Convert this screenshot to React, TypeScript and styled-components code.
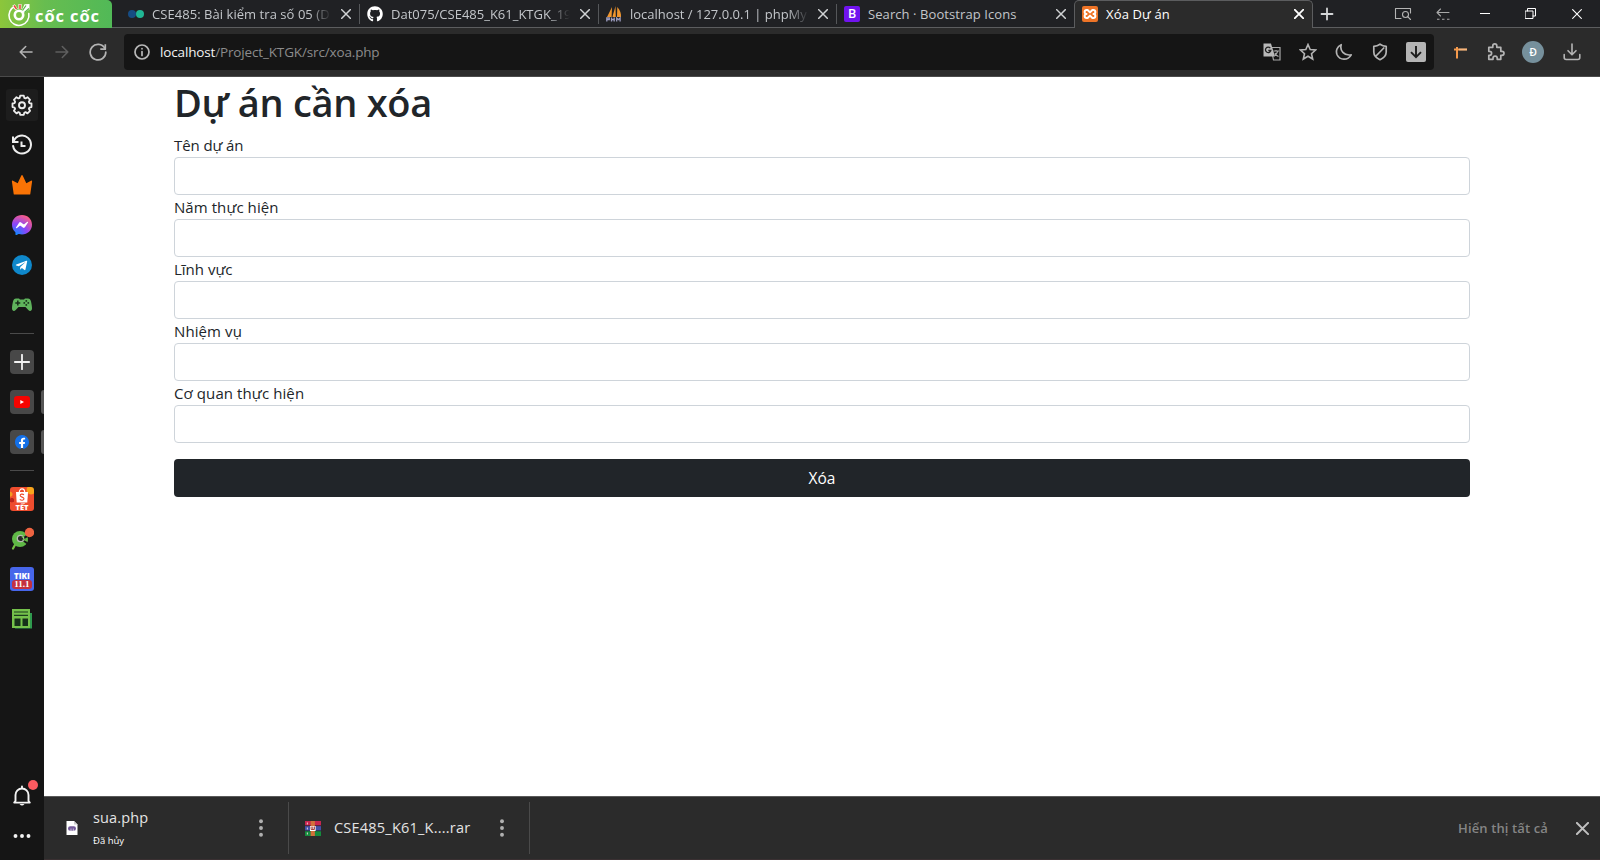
import React from "react";
import styled, { createGlobalStyle } from "styled-components";
import { FaGithub, FaTelegramPlane } from "react-icons/fa";
import { BsMessenger, BsFacebook } from "react-icons/bs";

const ui = `"Open Sans", "Noto Sans", sans-serif`;
const line = "#5c5d5f";

const GlobalStyle = createGlobalStyle`
  *, *::before, *::after { box-sizing: border-box; }
  body { margin: 0; background: #fff; font-family: ${ui}; overflow: hidden; }
  svg { display: block; flex: none; }
`;

const Browser = styled.div`
  display: flex;
  flex-direction: column;
  width: 1600px;
  height: 860px;
  background: #fff;
`;

/* ---------- tab strip ---------- */

const TabStrip = styled.div`
  display: flex;
  height: 28px;
  background: #202124;
`;

const Brand = styled.div`
  display: flex;
  align-items: center;
  width: 112px;
  height: 28px;
  padding-left: 7px;
  border-top-right-radius: 5px;
  background: linear-gradient(90deg, #8cc63b 0, #67bd50 45px, #51b957 100%);
`;

const BrandName = styled.span`
  margin: 4px 0 0 4px;
  color: #fff;
  font-size: 16.5px;
  line-height: 24px;
  font-weight: 700;
  letter-spacing: 0.9px;
  white-space: nowrap;
`;

const StripFill = styled.div<{ $w?: number }>`
  ${(p) => (p.$w ? `width: ${p.$w}px;` : "flex: 1;")}
  border-bottom: 1px solid ${line};
`;

const Tab = styled.div<{ $active?: boolean; $divider?: boolean; $w: number }>`
  position: relative;
  display: flex;
  align-items: center;
  width: ${(p) => p.$w}px;
  height: 28px;
  padding: 0 ${(p) => (p.$divider ? 9 : 8)}px 0 7px;
  color: ${(p) => (p.$active ? "#fff" : "#c3c6ca")};
  ${(p) =>
    p.$active
      ? `background: #2b2b2b; border: 1px solid ${line}; border-bottom: 0; border-radius: 5px 5px 0 0; padding-bottom: 1px;`
      : `border-bottom: 1px solid ${line};`}
  ${(p) =>
    p.$divider
      ? `&::after { content: ""; position: absolute; right: 0; top: 4px; width: 1px; height: 20px; background: #55575a; }`
      : ""}
`;

const TabTitle = styled.span<{ $ls: number; $fade?: boolean }>`
  flex: 1;
  margin-left: 8px;
  margin-right: 6px;
  white-space: nowrap;
  font-size: 13px;
  line-height: 20px;
  letter-spacing: ${(p) => p.$ls}px;
  ${(p) => (p.$fade ? "mask-image: linear-gradient(90deg, #000 158px, transparent 179px);" : "")}
`;

const StripButton = styled.div<{ $w: number }>`
  display: flex;
  align-items: center;
  justify-content: center;
  width: ${(p) => p.$w}px;
  height: 28px;
  border-bottom: 1px solid ${line};
`;

/* ---------- toolbar ---------- */

const Toolbar = styled.div`
  display: flex;
  align-items: center;
  height: 49px;
  padding: 0 8px;
  background: #2b2b2b;
  border-bottom: 1px solid #4a4a4a;
`;

const ToolCell = styled.div<{ $w?: number }>`
  display: flex;
  flex: none;
  align-items: center;
  justify-content: center;
  width: ${(p) => p.$w ?? 36}px;
  height: 36px;
`;

const AddressBar = styled.div`
  display: flex;
  flex: none;
  align-items: center;
  width: 1310px;
  height: 36px;
  margin: 0 8px;
  background: #151515;
  border-radius: 4px;
`;

const Url = styled.span`
  flex: 1;
  color: #8c8c8c;
  font-size: 13.5px;
  letter-spacing: -0.15px;
  b { font-weight: 400; color: #f2f2f2; }
`;

const Avatar = styled.div`
  display: flex;
  align-items: center;
  justify-content: center;
  width: 22px;
  height: 22px;
  border-radius: 50%;
  background: #76909c;
  color: #fff;
  font-size: 10.5px;
  font-weight: 600;
`;

/* ---------- body ---------- */

const Body = styled.div`
  display: flex;
  flex: 1;
  min-height: 0;
`;

const Sidebar = styled.div`
  display: flex;
  flex-direction: column;
  align-items: center;
  width: 44px;
  padding: 8px 0 4px;
  background: #151515;
`;

const SideCell = styled.div<{ $open?: boolean }>`
  position: relative;
  display: flex;
  align-items: center;
  justify-content: center;
  width: 44px;
  height: 40px;
  ${(p) =>
    p.$open
      ? `&::after { content: ""; position: absolute; right: 0; top: 8px; width: 3px; height: 24px; background: #555; border-radius: 3px 0 0 3px; }`
      : ""}
`;

const SettingsTile = styled.div`
  display: flex;
  align-items: center;
  justify-content: center;
  width: 32px;
  height: 32px;
  border-radius: 3px;
  background: #1d1d1d;
`;

const SiteTile = styled.div`
  display: flex;
  align-items: center;
  justify-content: center;
  width: 24px;
  height: 24px;
  border-radius: 4px;
  background: #484848;
`;

const SideRule = styled.div`
  width: 24px;
  height: 1px;
  margin: 8px 0;
  background: #4a4a4a;
`;

const Spacer = styled.div`
  flex: 1;
`;

const Main = styled.div`
  display: flex;
  flex-direction: column;
  flex: 1;
`;

const Page = styled.main`
  flex: 1;
  width: 1320px;
  margin: 0 auto;
  padding: 0 12px;
  color: #212529;
`;

const Heading = styled.h1`
  margin: 0 0 8px;
  font-size: 38px;
  line-height: 51px;
  height: 48px;
  font-weight: 600;
  letter-spacing: -0.3px;
`;

const Label = styled.label<{ $ls: number }>`
  display: block;
  height: 24px;
  font-size: 15px;
  line-height: 25px;
  letter-spacing: ${(p) => p.$ls}px;
`;

const Input = styled.input`
  display: block;
  width: 100%;
  height: 38px;
  border: 1px solid #ced4da;
  border-radius: 4px;
  background: #fff;
  outline: none;
`;

const Submit = styled.button`
  display: block;
  width: 100%;
  height: 38px;
  margin-top: 16px;
  padding: 0;
  border: 0;
  border-radius: 4px;
  background: #212529;
  color: #fff;
  font-family: ${ui};
  font-size: 15.5px;
  line-height: 38px;
`;

/* ---------- downloads ---------- */

const Downloads = styled.div`
  display: flex;
  align-items: center;
  height: 64px;
  padding-right: 5px;
  background: #2b2b2b;
  border-top: 1px solid #5a5a5a;
  border-bottom: 1px solid #3a3032;
`;

const DownloadItem = styled.div<{ $w: number; $pad: number }>`
  display: flex;
  align-items: center;
  width: ${(p) => p.$w}px;
  height: 52px;
  padding-left: ${(p) => p.$pad}px;
  padding-right: 25px;
  border-right: 1px solid #4a4a4a;
`;

const FileInfo = styled.div<{ $gap: number }>`
  flex: 1;
  margin-left: ${(p) => p.$gap}px;
  white-space: nowrap;
`;

const FileName = styled.div<{ $ls: number }>`
  color: #e4e4e4;
  font-size: 14.5px;
  line-height: 22px;
  letter-spacing: ${(p) => p.$ls}px;
`;

const FileStatus = styled.div`
  margin-top: 3px;
  color: #fff;
  font-size: 9.5px;
  line-height: 18px;
`;

const ShowAll = styled.span`
  margin-right: 21px;
  color: #858585;
  font-size: 13px;
  font-weight: 600;
  letter-spacing: 0.12px;
`;

/* ---------- icons ---------- */

const Cross = ({ s = 10, c = "#d0d2d4", w = 1.5 }: { s?: number; c?: string; w?: number }) => (
  <svg width={s} height={s} viewBox="0 0 10 10" stroke={c} strokeWidth={(w * 10) / s} strokeLinecap="square">
    <path d="M.7.7l8.6 8.6M9.3.7L.7 9.3" />
  </svg>
);

const Stroke = ({ w = 20, h = w, c = "#b4b4b4", sw = 1.6, children }: {
  w?: number; h?: number; c?: string; sw?: number; children: React.ReactNode;
}) => (
  <svg width={w} height={h} viewBox={`0 0 ${w} ${h}`} fill="none" stroke={c} strokeWidth={sw} strokeLinecap="round" strokeLinejoin="round">
    {children}
  </svg>
);

const BrandMark = () => (
  <svg width="24" height="26" viewBox="0 0 24 26" fill="none">
    <path d="M8 5.200A10 10 0 1 0 21.800 12.500" stroke="#fff" strokeWidth="1.500" strokeLinecap="round" />
    <circle cx="12" cy="14" r="4.200" stroke="#fff" strokeWidth="2.600" />
    <path d="M14.500 10L17.500 3.200 22.500 3V8.500L17 12z" fill="#fff" />
    <path d="M15.500 9.500l3.500-5M17.500 11.500l4.500-4" stroke="#5bb947" strokeWidth="1.300" />
    <path d="M13 8V3M9.500 8.500L6.500 4" stroke="#fff" strokeWidth="3" />
    <path d="M13 8V3.500M9.500 8L7 4.500" stroke="#e9483a" strokeWidth="1.600" />
  </svg>
);

const MoodleDots = () => (
  <svg width="16" height="16" viewBox="0 0 16 16">
    <circle cx="4" cy="8" r="4" fill="#164c83" />
    <circle cx="12" cy="8" r="4" fill="#20b795" />
  </svg>
);

const Sails = () => (
  <svg width="16" height="16" viewBox="0 0 16 16">
    <path d="M6 1L1 11h4.6zM9.500 0C8.500 4 7 8 6.500 11h3.300zM11.300 1c3 3 4 7 3.700 10h-4z" fill="#f0962e" />
    <path d="M.8 15.500v-3.500h2.500v1.700H.8M5.500 11.500v4M5.500 13.500h2.700M8.200 11.500v4M10.700 15.500v-3.500l1.700 1.700 1.700-1.700v3.500" stroke="#9c9cc0" strokeWidth="1.300" fill="none" />
  </svg>
);

const BootstrapMark = styled.div`
  width: 16px;
  height: 16px;
  border-radius: 2px;
  background: #7113ee;
  color: #fff;
  font-size: 12.5px;
  font-weight: 600;
  line-height: 16px;
  text-align: center;
`;

const Xampp = () => (
  <svg width="16" height="16" viewBox="0 0 16 16">
    <rect width="16" height="16" rx="2" fill="#ee7427" />
    <path d="M5.600 4H4.800a2 2 0 0 0-.3 4 2 2 0 0 0 .3 4h.8L8 9.600l2.400 2.400h.8a2 2 0 0 0 .3-4 2 2 0 0 0-.3-4h-.8L8 6.400z" fill="none" stroke="#fff" strokeWidth="2" strokeLinejoin="round" />
  </svg>
);

const Gear = () => (
  <Stroke w={22} c="#ededed" sw={1.9}>
    <path d="M9.1 1.8h3.8l.5 2.4 1.3.6 2.1-1.3 2.7 2.7-1.3 2.1.6 1.3 2.2.5v3.8l-2.2.5-.6 1.3 1.3 2.1-2.7 2.7-2.1-1.3-1.3.6-.5 2.2H9.1l-.5-2.2-1.3-.6-2.1 1.3-2.7-2.7 1.3-2.1-.6-1.3L1 13.900V10.100l2.200-.5.6-1.300L2.500 6.200l2.700-2.700 2.100 1.300 1.300-.6z" transform="translate(.55 -.1) scale(.95)" />
    <circle cx="11" cy="11.200" r="3" />
  </Stroke>
);

const History = () => (
  <Stroke w={22} c="#ededed" sw={2}>
    <path d="M2.700 7A9 9 0 1 1 2.100 12" />
    <path d="M2 2.500v5.500h5.500" strokeLinecap="butt" strokeLinejoin="miter" />
    <path d="M10.500 7.500V12h4" strokeLinecap="butt" strokeLinejoin="miter" />
  </Stroke>
);

const Crown = () => (
  <svg width="22" height="22" viewBox="0 0 22 22">
    <path d="M3.300 20.600Q2.800 20.600 2.700 20L.9 7.500Q.8 6.300 2 6.700l4.700 2.600L10.300 1.500q.7-1 1.400 0l3.600 7.800L20 6.700q1.200-.4 1.100.8L19.300 20q-.1.600-.6.600z" fill="#f97305" />
  </svg>
);

const MessengerGradient = () => (
  <svg width="0" height="0">
    <defs>
      <radialGradient id="msg" cx=".2" cy="1" r="1.100">
        <stop offset="0" stopColor="#0a8cff" />
        <stop offset=".5" stopColor="#8a45fb" />
        <stop offset="1" stopColor="#ff5d80" />
      </radialGradient>
    </defs>
  </svg>
);

const MessengerBack = styled.div`
  display: flex;
  width: 20px;
  height: 20px;
  background: radial-gradient(circle at 50% 50%, #fff 0 7px, transparent 7.500px);
  svg path { fill: url(#msg); }
`;

const TelegramDisc = styled.div`
  display: flex;
  align-items: center;
  justify-content: center;
  width: 20px;
  height: 20px;
  padding-right: 2px;
  border-radius: 50%;
  background: #0f88cb;
`;

const FacebookBack = styled.div`
  display: flex;
  border-radius: 50%;
  background: radial-gradient(circle, #fff 0 6px, transparent 6.500px);
`;

const Gamepad = () => (
  <svg width="22" height="16" viewBox="0 0 22 16">
    <path d="M5 1.500h3l1 1h4l1-1h3c1.600 0 2.500 1 3 3 .6 2.600 1 5 1 7 0 2.500-2.200 3.200-3.700 1.500L14.500 10h-7l-2.800 3C3.200 14.700 1 14 1 11.500c0-2 .4-4.400 1-7 .5-2 1.400-3 3-3z" fill="#5fb35c" />
    <path d="M6.800 3.500v5M4.300 6h5" stroke="#17301a" strokeWidth="1.500" />
    <g fill="#17301a"><circle cx="15.300" cy="3.900" r=".95" /><circle cx="15.300" cy="7.900" r=".95" /><circle cx="13.300" cy="5.900" r=".95" /><circle cx="17.300" cy="5.900" r=".95" /></g>
  </svg>
);

const YouTube = () => (
  <svg width="16" height="12" viewBox="0 0 16 12">
    <rect width="16" height="12" rx="3" fill="#f60400" />
    <path d="M6.300 3.900v4.200L10 6z" fill="#fff" />
  </svg>
);

const ShopTile = styled.div`
  display: flex;
  flex-direction: column;
  align-items: center;
  width: 24px;
  height: 24px;
  padding-top: 1px;
  border-radius: 3px;
  overflow: hidden;
  background: radial-gradient(circle at 88% 12%, #f9a51c 0 4px, transparent 5px),
    radial-gradient(circle at 0 30%, #f39a20 0 2px, transparent 3px),
    radial-gradient(circle at 8% 55%, #b9241a 0 2px, transparent 2.500px), #ee4d2e;
  color: #fff;
  font-size: 7.500px;
  font-weight: 800;
  line-height: 8px;
`;

const ShopBag = () => (
  <svg width="14" height="15" viewBox="0 0 14 15">
    <path d="M1 4h12l-.7 10.500H1.700z" fill="#fff" />
    <path d="M4.300 4.500C4.300-.3 9.700-.3 9.700 4.500" fill="none" stroke="#fff" strokeWidth="1.200" />
    <path d="M9 6.800C7.500 5.600 5 6 5.200 7.600c.2 1.700 3.800 1.400 3.800 3.200 0 1.700-2.800 1.800-4.200.6" fill="none" stroke="#ee4d2e" strokeWidth="1.100" />
  </svg>
);

const Lime = () => (
  <svg width="24" height="24" viewBox="0 0 24 24">
    <path d="M6 16l-3 5.500" stroke="#74c043" strokeWidth="2.200" strokeLinecap="round" />
    <circle cx="10" cy="12" r="8" fill="#5fb846" />
    <path d="M10 12l8-5.500 1 3-4 2 2.500 4-1 1.500z" fill="#151515" />
    <circle cx="10.500" cy="11.500" r="3.200" fill="#292929" stroke="#b5bdb0" strokeWidth="1.300" />
    <path d="M12 10.500l5.500-4.500M13 12l4.500 2" stroke="#67b94a" strokeWidth="1.400" />
    <circle cx="19.500" cy="5.500" r="4.700" fill="#ee6341" />
  </svg>
);

const TikiTile = styled.div`
  display: flex;
  flex-direction: column;
  align-items: center;
  width: 24px;
  height: 24px;
  padding-top: 4px;
  border-radius: 3px;
  background: #4766ea;
  color: #fff;
  font-size: 8px;
  font-weight: 800;
  line-height: 9px;
`;

const TikiDate = styled.span`
  display: block;
  width: 20px;
  height: 9px;
  border-radius: 3px;
  background: #c5313f;
  font-family: "Liberation Serif", serif;
  font-size: 9px;
  font-weight: 700;
  line-height: 9px;
  text-align: center;
`;

const News = () => (
  <svg width="22" height="22" viewBox="0 0 22 22">
    <path d="M19 5h2v15.500H4V19h15z" fill="#2f9a4e" />
    <rect x="1" y="1" width="18" height="19" fill="#74c14b" />
    <path d="M3 4h14M3 7.300h14" stroke="#1b3d1d" strokeWidth="1.200" />
    <path d="M3.500 10.500h6v7.500h-6zM11.500 10.500h5.500v7.500h-5.500z" fill="#16301a" />
  </svg>
);

const Bell = () => (
  <svg width="32" height="34" viewBox="0 0 32 34" fill="none">
    <path d="M9.500 22v-6a6.500 6.500 0 0 1 13 0V22l1.300 1.600H8.200zM16 7.500v2" stroke="#f3f3f3" strokeWidth="1.900" strokeLinecap="round" strokeLinejoin="round" />
    <path d="M13.500 25h5q-2.500 3-5 0z" fill="#f3f3f3" />
    <circle cx="27" cy="6" r="5" fill="#fb5a60" />
  </svg>
);

const Dots = ({ vertical }: { vertical?: boolean }) => (
  <svg width={vertical ? 4 : 18} height={vertical ? 18 : 4} viewBox={vertical ? "0 0 4 18" : "0 0 18 4"} fill={vertical ? "#b0b0b0" : "#f3f3f3"}>
    {(vertical ? [2.3, 9, 15.700] : [2.500, 9, 15.500]).map((n) => (
      <circle key={n} cx={vertical ? 2 : n} cy={vertical ? n : 2} r="1.950" />
    ))}
  </svg>
);

const PhpFile = () => (
  <svg width="12" height="14" viewBox="0 0 12 14">
    <path d="M.5 0H8l3.500 3.500V14H.5z" fill="#fff" />
    <path d="M8 0v3.500h3.500" fill="#ccc" />
    <rect x="2" y="5.300" width="8" height="4.400" rx="2.200" fill="#735a99" />
    <path d="M5 7.500v2.500M7.300 7.500v2.500" stroke="#fff" strokeWidth=".6" />
  </svg>
);

const RarFile = () => (
  <svg width="16" height="15" viewBox="0 0 17 15" preserveAspectRatio="none">
    <rect width="17" height="5" fill="#c72650" />
    <rect y="5" width="17" height="5" fill="#4450a8" />
    <rect y="10" width="17" height="5" fill="#158b3d" />
    <path d="M0 4.700h17M0 9.800h17" stroke="#25202b" strokeWidth=".8" />
    <rect x="6" width="4.500" height="15" fill="#d3703a" />
    <rect x="5.300" y="5" width="6" height="5" fill="#fff" />
    <path d="M6.500 5.500v3h3.500v-3M8.300 5.500v3" stroke="#a23b35" strokeWidth="1" fill="none" />
    <path d="M2.500 1.500v2M2.500 6.500v2M2.500 11.500v2" stroke="#f0d5dc" strokeWidth="1" />
  </svg>
);

const Translate = () => (
  <svg width="18" height="18" viewBox="0 0 18 18">
    <path d="M8 4.500h9v12.500h-6.500z" fill="none" stroke="#a8a8a8" strokeWidth="1.200" />
    <path d="M.5.500h7.500l4 13H.5z" fill="#b9b9b9" />
    <path d="M7.300 5.200A2.700 2.700 0 1 0 7.800 7.500H5.300" fill="none" stroke="#202020" strokeWidth="1.300" />
    <path d="M10.500 8h5.500M13 7v1M14.800 8q-.8 3-3.300 4.500M12 10q1 2.500 3.500 3.500" fill="none" stroke="#a8a8a8" strokeWidth="1.100" />
  </svg>
);

const fields = [
  { name: "ten", label: "Tên dự án", spacing: -0.1 },
  { name: "nam", label: "Năm thực hiện", spacing: 0.07 },
  { name: "linhvuc", label: "Lĩnh vực", spacing: 0 },
  { name: "nhiemvu", label: "Nhiệm vụ", spacing: 0.1 },
  { name: "coquan", label: "Cơ quan thực hiện", spacing: 0.1 },
];

export default function App() {
  return (
    <Browser>
      <GlobalStyle />
      <TabStrip>
        <Brand>
          <BrandMark />
          <BrandName>cốc cốc</BrandName>
        </Brand>
        <StripFill $w={9} />
        <Tab $w={239} $divider>
          <MoodleDots />
          <TabTitle $ls={0.05} $fade>CSE485: Bài kiểm tra số 05 (D</TabTitle>
          <Cross />
        </Tab>
        <Tab $w={239} $divider>
          <FaGithub size={16} color="#fff" />
          <TabTitle $ls={0} $fade>Dat075/CSE485_K61_KTGK_19</TabTitle>
          <Cross />
        </Tab>
        <Tab $w={238} $divider>
          <Sails />
          <TabTitle $ls={0} $fade>localhost / 127.0.0.1 | phpMy</TabTitle>
          <Cross />
        </Tab>
        <Tab $w={237}>
          <BootstrapMark>B</BootstrapMark>
          <TabTitle $ls={0.08}>Search · Bootstrap Icons</TabTitle>
          <Cross />
        </Tab>
        <Tab $w={239} $active>
          <Xampp />
          <TabTitle $ls={0.15}>Xóa Dự án</TabTitle>
          <Cross c="#fff" w={1.8} />
        </Tab>
        <StripButton $w={28}>
          <Stroke w={14} c="#d4d6d8" sw={1.8}><path d="M7 1.500v11M1.500 7h11" /></Stroke>
        </StripButton>
        <StripFill />
        <StripButton $w={40}>
          <Stroke w={18} h={14} c="#b4b4b4" sw={1.100}>
            <path d="M7 11.500H1.500v-10h15V6" /><circle cx="11.500" cy="7.500" r="3" /><path d="M13.700 9.700l2.800 2.800" />
          </Stroke>
        </StripButton>
        <StripButton $w={40}>
          <Stroke w={14} h={12} c="#a8a8a8" sw={1.100}>
            <path d="M1 4.500h12M4.500 1L1 4.500 4.500 8" /><path d="M1 11.300h13" strokeDasharray="2.500 2.500" strokeLinecap="butt" />
          </Stroke>
        </StripButton>
        <StripButton $w={44}>
          <Stroke w={10} h={2} c="#fff" sw={1}><path d="M0 .5h10" /></Stroke>
        </StripButton>
        <StripButton $w={47}>
          <Stroke w={11} h={11} c="#fff" sw={1}><path d="M.5 3h7.500v7.500H.5zM2.500 3V.5h8V8H8" strokeLinejoin="miter" /></Stroke>
        </StripButton>
        <StripButton $w={46}><Cross c="#fff" w={1.100} /></StripButton>
      </TabStrip>

      <Toolbar>
        <ToolCell><Stroke w={14} h={14}><path d="M13 7H1.200M6.700 1.500L1.200 7l5.500 5.500" /></Stroke></ToolCell>
        <ToolCell><Stroke w={14} h={14} c="#5f5f5f"><path d="M1 7h11.800M7.300 1.500L12.800 7l-5.500 5.500" /></Stroke></ToolCell>
        <ToolCell>
          <Stroke w={18} sw={1.700}><path d="M15.800 5.300A7.800 7.800 0 1 0 16.800 9" /><path d="M16.300 1.200v5h-5" strokeLinecap="butt" /></Stroke>
        </ToolCell>
        <AddressBar>
          <ToolCell>
            <Stroke w={16} sw={1.700} c="#b8b8b8"><circle cx="8" cy="8" r="7" /><path d="M8 7.500v4M8 4.500v.3" /></Stroke>
          </ToolCell>
          <Url><b>localhost</b>/Project_KTGK/src/xoa.php</Url>
          <ToolCell><Translate /></ToolCell>
          <ToolCell>
            <Stroke w={18} sw={1.600}><path d="M9 1.500l2.200 5 5.300.5-4 3.700 1.200 5.300L9 13.200 4.300 16l1.200-5.300-4-3.700 5.300-.5z" strokeLinejoin="miter" /></Stroke>
          </ToolCell>
          <ToolCell><Stroke w={18} sw={1.700}><path d="M6.200 1.700C4.500 7.500 9 13 16.200 11.800 13 17.500 5 17.700 2.200 12 .4 8 2 3.500 6.200 1.700z" /></Stroke></ToolCell>
          <ToolCell>
            <Stroke w={16} h={18} sw={1.700}><path d="M8 1.200C6 2.600 4 3.200 1.800 3.300V9c0 3.600 2.500 6 6.200 7.700C11.700 15 14.200 12.600 14.200 9V3.300C12 3.200 10 2.600 8 1.200zM11.800 5l-7.300 7.500" /></Stroke>
          </ToolCell>
          <ToolCell>
            <svg width="20" height="20" viewBox="0 0 20 20"><rect width="20" height="20" rx="2" fill="#b4b4b4" /><path d="M10 4v11M5 10.200l5 5 5-5" fill="none" stroke="#1b1b1b" strokeWidth="1.900" /></svg>
          </ToolCell>
        </AddressBar>
        <ToolCell>
          <svg width="13" height="13" viewBox="0 0 13 13"><path d="M0 3.500h5M3 1v11.500" stroke="#f59a4c" strokeWidth="2" /><path d="M5 3.500h8" stroke="#f7b57b" strokeWidth="2.200" /></svg>
        </ToolCell>
        <ToolCell>
          <Stroke w={18} sw={1.700}><path d="M1.800 5h4V3.600a2 2 0 0 1 4 0V5h4v4h1.200a2 2 0 0 1 0 4h-1.200v4h-3.600v-1a2 2 0 0 0-4.200 0v1H1.800v-4h.8a2 2 0 0 0 0-4h-.8z" transform="translate(0 -.7)" /></Stroke>
        </ToolCell>
        <ToolCell $w={38}><Avatar>Đ</Avatar></ToolCell>
        <ToolCell $w={40}>
          <Stroke w={18} sw={1.600}><path d="M9 1v10.500M5 7.700l4 4 4-4M1.200 11.500v3q0 2 2 2h11.600q2 0 2-2v-3" /></Stroke>
        </ToolCell>
      </Toolbar>

      <Body>
        <Sidebar>
          <SideCell><SettingsTile><Gear /></SettingsTile></SideCell>
          <SideCell><History /></SideCell>
          <SideCell><Crown /></SideCell>
          <SideCell><MessengerBack><BsMessenger size={20} /></MessengerBack></SideCell>
          <SideCell><TelegramDisc><FaTelegramPlane size={13} color="#fff" /></TelegramDisc></SideCell>
          <SideCell><Gamepad /></SideCell>
          <SideRule />
          <SideCell><SiteTile><Stroke w={16} c="#f3f3f3" sw={1.800}><path d="M8 .8v14.400M.8 8h14.400" /></Stroke></SiteTile></SideCell>
          <SideCell $open><SiteTile><YouTube /></SiteTile></SideCell>
          <SideCell $open><SiteTile><FacebookBack><BsFacebook size={14} color="#1470e8" /></FacebookBack></SiteTile></SideCell>
          <SideRule />
          <SideCell><ShopTile><ShopBag />TẾT</ShopTile></SideCell>
          <SideCell><Lime /></SideCell>
          <SideCell><TikiTile>TIKI<TikiDate>11.1</TikiDate></TikiTile></SideCell>
          <SideCell><News /></SideCell>
          <Spacer />
          <SideCell><Bell /></SideCell>
          <SideCell><Dots /></SideCell>
          <MessengerGradient />
        </Sidebar>
        <Main>
          <Page>
            <Heading>Dự án cần xóa</Heading>
            <form>
              {fields.map((f) => (
                <React.Fragment key={f.name}>
                  <Label htmlFor={f.name} $ls={f.spacing}>{f.label}</Label>
                  <Input id={f.name} name={f.name} />
                </React.Fragment>
              ))}
              <Submit type="button">Xóa</Submit>
            </form>
          </Page>
          <Downloads>
            <DownloadItem $w={245} $pad={22}>
              <PhpFile />
              <FileInfo $gap={15}>
                <FileName $ls={0.15}>sua.php</FileName>
                <FileStatus>Đã hủy</FileStatus>
              </FileInfo>
              <Dots vertical />
            </DownloadItem>
            <DownloadItem $w={241} $pad={16}>
              <RarFile />
              <FileInfo $gap={13}>
                <FileName $ls={0.22}>CSE485_K61_K....rar</FileName>
              </FileInfo>
              <Dots vertical />
            </DownloadItem>
            <Spacer />
            <ShowAll>Hiển thị tất cả</ShowAll>
            <ToolCell $w={26}><Cross s={13} c="#c0c0c0" w={2} /></ToolCell>
          </Downloads>
        </Main>
      </Body>
    </Browser>
  );
}
